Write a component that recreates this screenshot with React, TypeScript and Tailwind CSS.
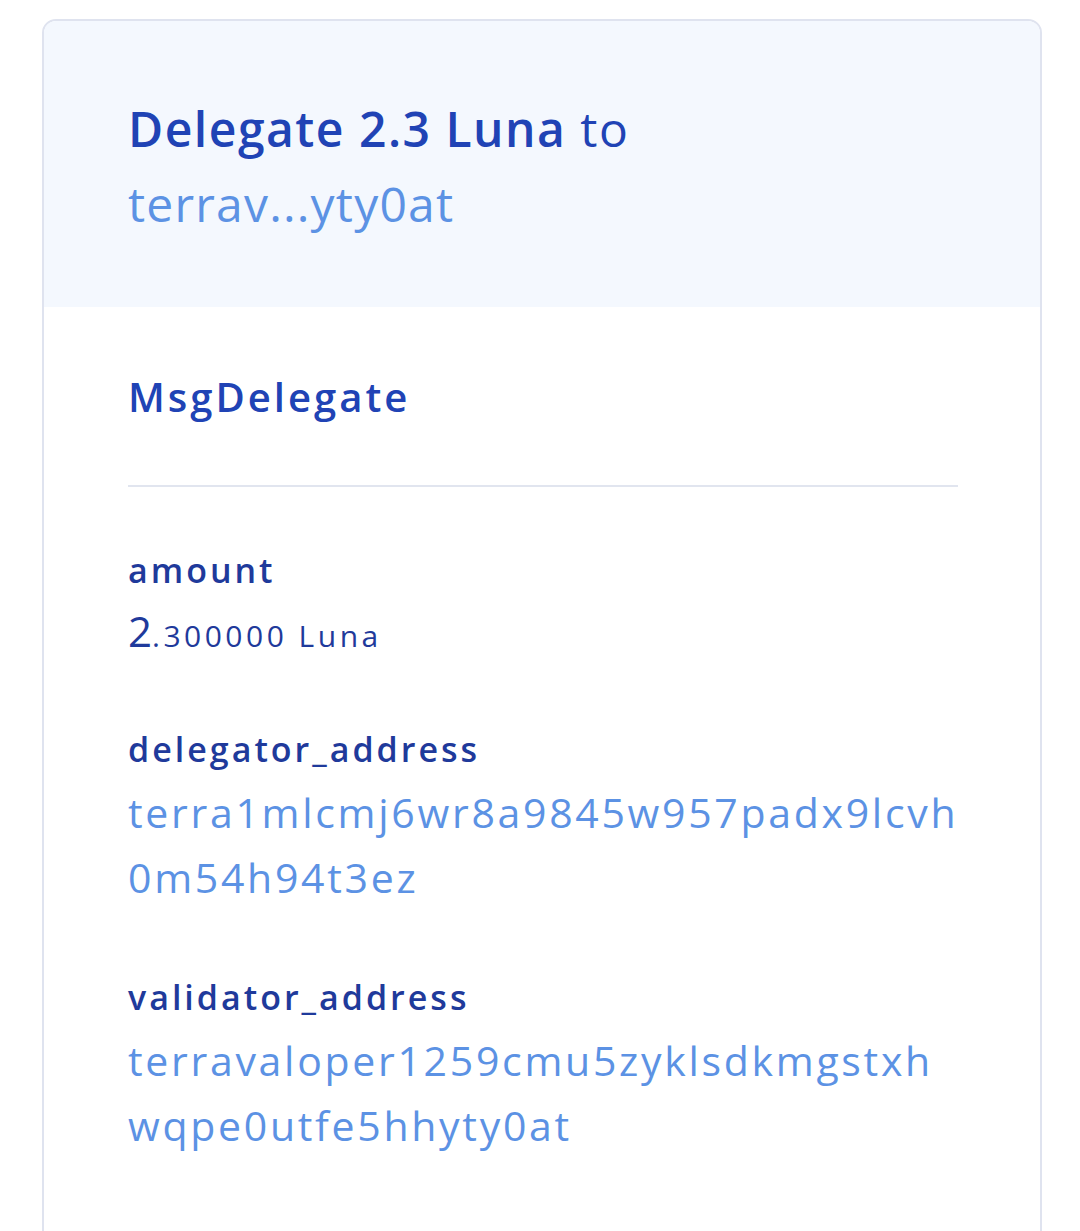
import React from "react";

const font = { fontFamily: '"Open Sans", "Noto Sans", sans-serif' };

function Field({ label, children }: { label: string; children: React.ReactNode }) {
  return (
    <div className="mb-[62px]">
      <div className="text-[34px] leading-[50px] font-semibold tracking-[3px] text-[#1f3a9b]">{label}</div>
      <div className="mt-[6px]">{children}</div>
    </div>
  );
}

export default function App() {
  return (
    <div className="min-h-[1231px] bg-white pt-[19px] pl-[42px] pr-[38px]" style={font}>
      <div className="min-h-[1300px] rounded-t-[14px] border-2 border-[#dfe3ef] overflow-hidden">
        <div className="bg-[#f4f8fe] h-[286px] px-[84px] pt-[70px] tracking-[1.5px]">
          <div className="text-[48px] leading-[75px] text-[#2043b5]">
            <span className="font-semibold">Delegate 2.3 Luna</span> to
          </div>
          <div className="text-[48px] leading-[75px] tracking-[1.2px] text-[#5c92e4]">terrav...yty0at</div>
        </div>
        <div className="px-[84px] pt-[62px]">
          <div className="text-[40px] leading-[56px] font-semibold tracking-[3px] text-[#2043b5]">MsgDelegate</div>
          <div className="mt-[60px] mb-[58px] h-[2px] bg-[#e1e5ef] w-[830px]" />
          <div className="mb-[55px]">
            <div className="text-[34px] leading-[50px] font-semibold tracking-[3px] text-[#1f3a9b]">amount</div>
            <div className="mt-[8px] text-[#1f3a9b] leading-[56px]">
              <span className="text-[42px]">2</span>
              <span className="text-[30px] tracking-[3.5px]">.300000 Luna</span>
            </div>
          </div>
          <Field label="delegator_address">
            <div className="w-[840px] text-[41px] leading-[65px] tracking-[2.7px] text-[#5c92e4]">
              <span className="block">terra1mlcmj6wr8a9845w957padx9lcvh</span>
              <span className="block">0m54h94t3ez</span>
            </div>
          </Field>
          <Field label="validator_address">
            <div className="w-[840px] text-[41px] leading-[65px] tracking-[2.7px] text-[#5c92e4]">
              <span className="block">terravaloper1259cmu5zyklsdkmgstxh</span>
              <span className="block">wqpe0utfe5hhyty0at</span>
            </div>
          </Field>
        </div>
      </div>
    </div>
  );
}
